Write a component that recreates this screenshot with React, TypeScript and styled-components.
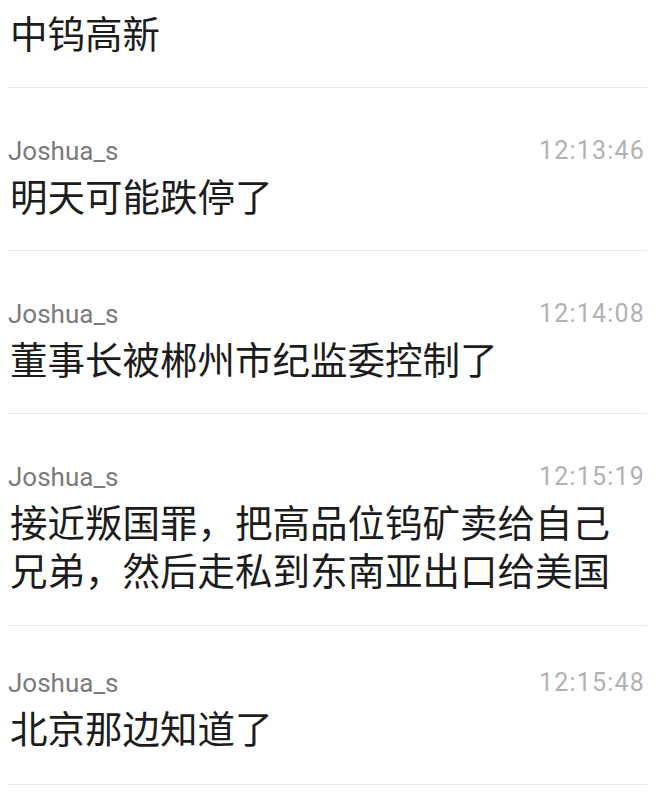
import React from "react";
import styled, { createGlobalStyle } from "styled-components";

const GlobalStyle = createGlobalStyle`
  html, body {
    margin: 0;
    padding: 0;
    background: #ffffff;
    overflow: hidden;
  }
  body {
    font-family: Roboto, "Noto Sans CJK SC", sans-serif;
  }
`;

const Viewport = styled.div`
  width: 665px;
  height: 800px;
  overflow: hidden;
  background: #ffffff;
`;

const List = styled.div`
  display: flex;
  flex-direction: column;
  margin: 0 18px 0 8px;
`;

const Item = styled.div<{ $top: number; $bottom: number }>`
  display: flex;
  flex-direction: column;
  padding: ${(p) => p.$top}px 0 ${(p) => p.$bottom}px 0;
  border-bottom: 1px solid #e9e9e9;
`;

const Header = styled.div`
  display: flex;
  justify-content: space-between;
  align-items: center;
  height: 30px;
  margin-bottom: 5px;
  padding-right: 2px;
`;

const Name = styled.span`
  font-family: Roboto, "Noto Sans CJK SC", sans-serif;
  font-size: 26px;
  line-height: 30px;
  color: #7b7b7b;
`;

const Time = styled.span`
  font-family: Roboto, sans-serif;
  font-size: 25px;
  line-height: 30px;
  letter-spacing: 1.2px;
  color: #b2b2b2;
`;

const Message = styled.div`
  padding-left: 2px;
  font-family: "Noto Sans CJK SC", sans-serif;
  font-size: 37.5px;
  line-height: 48px;
  color: #1c1c1c;
`;

type Msg = { name?: string; time?: string; lines: string[]; top: number; bottom: number };

const messages: Msg[] = [
  { lines: ["中钨高新"], top: 8, bottom: 31 },
  { name: "Joshua_s", time: "12:13:46", lines: ["明天可能跌停了"], top: 48, bottom: 31 },
  { name: "Joshua_s", time: "12:14:08", lines: ["董事长被郴州市纪监委控制了"], top: 48, bottom: 31 },
  {
    name: "Joshua_s",
    time: "12:15:19",
    lines: ["接近叛国罪，把高品位钨矿卖给自己", "兄弟，然后走私到东南亚出口给美国"],
    top: 48,
    bottom: 32,
  },
  { name: "Joshua_s", time: "12:15:48", lines: ["北京那边知道了"], top: 42, bottom: 33 },
];

export default function App() {
  return (
    <Viewport>
      <GlobalStyle />
      <List>
        {messages.map((m, i) => (
          <Item key={i} $top={m.top} $bottom={m.bottom}>
            {m.name && (
              <Header>
                <Name>{m.name}</Name>
                <Time>{m.time}</Time>
              </Header>
            )}
            <Message>
              {m.lines.map((l, j) => (
                <div key={j}>{l}</div>
              ))}
            </Message>
          </Item>
        ))}
      </List>
    </Viewport>
  );
}
